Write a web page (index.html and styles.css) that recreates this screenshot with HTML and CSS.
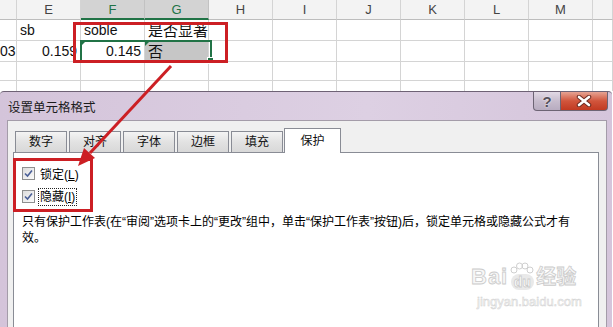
FILE: index.html
```html
<!DOCTYPE html>
<html lang="zh">
<head>
    <meta charset="UTF-8">
    <title>设置单元格格式</title>
    <link rel="stylesheet" href="styles.css">
</head>
<body>

    <div class="page">
        <div class="sheet">
            <div class="row head">
                <div class="cell"></div>
                <div class="cell">E</div>
                <div class="cell sel">F</div>
                <div class="cell sel">G</div>
                <div class="cell">H</div>
                <div class="cell">I</div>
                <div class="cell">J</div>
                <div class="cell">K</div>
                <div class="cell">L</div>
                <div class="cell">M</div>
                <div class="cell"></div>
            </div>
            <div class="row r1">
                <div class="cell"></div>
                <div class="cell">sb</div>
                <div class="cell">soble</div>
                <div class="cell cjk">是否显著</div>
                <div class="cell"></div><div class="cell"></div><div class="cell"></div>
                <div class="cell"></div><div class="cell"></div><div class="cell"></div><div class="cell"></div>
            </div>
            <div class="row">
                <div class="cell num">03</div>
                <div class="cell num">0.159</div>
                <div class="cell num flag">0.145</div>
                <div class="cell cjk flag grey">否</div>
                <div class="cell"></div><div class="cell"></div><div class="cell"></div>
                <div class="cell"></div><div class="cell"></div><div class="cell"></div><div class="cell"></div>
            </div>
            <div class="row">
                <div class="cell"></div><div class="cell"></div><div class="cell"></div><div class="cell"></div>
                <div class="cell"></div><div class="cell"></div><div class="cell"></div><div class="cell"></div>
                <div class="cell"></div><div class="cell"></div><div class="cell"></div>
            </div>
            <div class="row">
                <div class="cell"></div><div class="cell"></div><div class="cell"></div><div class="cell"></div>
                <div class="cell"></div><div class="cell"></div><div class="cell"></div><div class="cell"></div>
                <div class="cell"></div><div class="cell"></div><div class="cell"></div>
            </div>
            <div class="selection"><span class="handle"></span></div>
        </div>

        <div class="dialog">
            <div class="titlebar">
                <span class="title">设置单元格格式</span>
                <div class="caption-btns">
                    <span class="btn-help">?</span>
                    <span class="btn-close">
                        <svg width="16" height="12" viewBox="0 0 16 12">
                            <path d="M3 2 L13 10 M13 2 L3 10" stroke="#6b2a20" stroke-width="4.5" stroke-linecap="round"/>
                            <path d="M3 2 L13 10 M13 2 L3 10" stroke="#fff" stroke-width="2.6" stroke-linecap="round"/>
                        </svg>
                    </span>
                </div>
            </div>
            <div class="client">
                <div class="tabs">
                    <span class="tab">数字</span>
                    <span class="tab">对齐</span>
                    <span class="tab">字体</span>
                    <span class="tab">边框</span>
                    <span class="tab">填充</span>
                    <span class="tab active">保护</span>
                </div>
                <div class="panel">
                    <label class="check">
                        <span class="box"><svg width="9" height="9" viewBox="0 0 9 9"><path d="M1 4.5 L3.5 7 L8 1.5" fill="none" stroke="#4a5f97" stroke-width="1.6"/></svg></span>
                        <span>锁定(<u>L</u>)</span>
                    </label>
                    <label class="check">
                        <span class="box"><svg width="9" height="9" viewBox="0 0 9 9"><path d="M1 4.5 L3.5 7 L8 1.5" fill="none" stroke="#4a5f97" stroke-width="1.6"/></svg></span>
                        <span class="focus">隐藏(<u>I</u>)</span>
                    </label>
                    <p class="note">只有保护工作表(在“审阅”选项卡上的“更改”组中，单击“保护工作表”按钮)后，锁定单元格或隐藏公式才有效。</p>

                    <div class="watermark">
                        <div class="logo">
                            <span class="bai">Bai</span>
                            <span class="paw">
                                <svg width="24" height="12" viewBox="0 0 24 12">
                                    <circle cx="4" cy="8" r="3" fill="none" stroke="#cfcfcf"/>
                                    <circle cx="9.5" cy="4" r="3" fill="none" stroke="#cfcfcf"/>
                                    <circle cx="15" cy="4" r="3" fill="none" stroke="#cfcfcf"/>
                                    <circle cx="20" cy="8" r="3" fill="none" stroke="#cfcfcf"/>
                                </svg>
                                <span class="du">du</span>
                            </span>
                            <span class="jy">经验</span>
                        </div>
                        <div class="site">jingyan.baidu.com</div>
                    </div>
                </div>
            </div>
        </div>

        <div class="mark mark-cells"></div>
        <div class="mark mark-checks"></div>
        <svg class="arrow" width="613" height="327" viewBox="0 0 613 327">
            <line x1="171" y1="66" x2="90" y2="153" stroke="#cc1f24" stroke-width="3"/>
            <polygon points="78,166 95,158 84,148" fill="#cc1f24"/>
        </svg>
    </div>

</body>
</html>
```

FILE: styles.css
```css
body {
    margin: 0;
    background: #fff;
    font-family: 'Liberation Sans', Arial, sans-serif;
}
.page {
    position: relative;
    width: 613px;
    height: 327px;
    overflow: hidden;
}
.sheet {
    position: relative;
    height: 91px;
    overflow: hidden;
}
.row {
    display: grid;
    grid-template-columns: 17px repeat(9, 64px) 1fr;
    height: 20px;
}
.row.r1 { height: 21px; }
.cell {
    box-sizing: border-box;
    border-right: 1px solid #d4d4d4;
    border-bottom: 1px solid #d4d4d4;
    font-size: 14px;
    line-height: 20px;
    padding: 0 3px;
    color: #111;
    white-space: nowrap;
    overflow: hidden;
    position: relative;
}
.head .cell {
    background: #f3f3f3;
    color: #444;
    font-size: 13px;
    text-align: center;
    line-height: 19px;
    border-bottom-color: #bdbdbd;
}
.head .cell.sel {
    background: #d3d3d3;
    color: #217346;
    border-bottom: 2px solid #217346;
    border-right-color: #c2c2c2;
}
.cjk {
    font-family: 'Noto Sans CJK SC', sans-serif;
    font-size: 15px;
}
.num { text-align: right; }
.row .cell.num:first-child {
    padding: 0 2px 0 0;
    overflow: visible;
}
.grey { background: #c6c6c6; }
.flag::before {
    content: "";
    position: absolute;
    left: 0;
    top: 0;
    border-top: 5px solid #217346;
    border-right: 5px solid transparent;
}
.selection {
    position: absolute;
    left: 80px;
    top: 40px;
    width: 128px;
    height: 18px;
    border: 2px solid #217346;
}
.handle {
    position: absolute;
    right: -4px;
    bottom: -4px;
    width: 5px;
    height: 5px;
    background: #217346;
    border: 1px solid #fff;
}

/* dialog */
.dialog {
    width: 612px;
    height: 236px;
    background: linear-gradient(to right, #d4c4da, #ddd0e3 60%, #d5c5db);
    border-top: 1px solid #6e6275;
    border-radius: 4px 4px 0 0;
    box-sizing: border-box;
    font-family: 'Liberation Sans', 'Noto Sans CJK SC', sans-serif;
    font-size: 12px;
    color: #000;
}
.titlebar {
    display: flex;
    height: 28px;
}
.title {
    padding: 5px 0 0 8px;
    font-size: 12.5px;
    color: #1c1c1c;
}
.caption-btns {
    display: flex;
    margin-left: auto;
    margin-right: 4px;
    height: 19px;
}
.btn-help, .btn-close {
    display: flex;
    align-items: center;
    justify-content: center;
    box-sizing: border-box;
    height: 19px;
    border: 1px solid #6d6474;
    border-top: none;
}
.btn-help {
    width: 28px;
    border-radius: 0 0 0 4px;
    background: linear-gradient(#e2d9e5, #c7bccd 50%, #b8acc0);
    color: #55505a;
    font: bold 15px 'Liberation Sans', sans-serif;
    text-shadow: 0 0 2px #fff;
}
.btn-close {
    width: 47px;
    border-left: none;
    border-radius: 0 0 4px 0;
    background: linear-gradient(#e6a393, #d1553c 50%, #c13a22);
}
.client {
    margin: 0 5px 0 7px;
    height: 220px;
    background: #f0f0f0;
    border: 1px solid #a49ca9;
    box-sizing: border-box;
    padding: 10px 7px 0 5px;
}
.tabs {
    display: flex;
    align-items: flex-end;
    height: 21px;
    padding-left: 2px;
}
.tab {
    width: 52px;
    height: 21px;
    box-sizing: border-box;
    margin-right: 2px;
    border: 1px solid #898c95;
    border-bottom: none;
    background: linear-gradient(#f4f4f4, #e2e2e2 50%, #d8d8d8);
    text-align: center;
    line-height: 20px;
    color: #111;
}
.tab.active {
    position: relative;
    z-index: 1;
    width: 57px;
    height: 25px;
    margin: 0 0 -1px -1px;
    background: #fff;
    line-height: 24px;
}
.panel {
    position: relative;
    height: 200px;
    background: #fff;
    border: 1px solid #898c95;
    padding: 9px 8px 0 8px;
}
.check {
    display: flex;
    align-items: center;
    gap: 5px;
    height: 23px;
}
.box {
    display: flex;
    align-items: center;
    justify-content: center;
    width: 13px;
    height: 13px;
    box-sizing: border-box;
    border: 1px solid #8e8f8f;
    background: linear-gradient(135deg, #dcdcdc, #fbfbfb);
}
.focus {
    border: 1px dotted #222;
    padding: 0 1px;
    margin-left: -2px;
    line-height: 16px;
}
.note {
    margin: 6px 0 0 0;
    width: 560px;
    line-height: 16px;
}
.watermark {
    position: absolute;
    left: 457px;
    top: 108px;
    color: #f7f7f7;
    -webkit-text-stroke: 0.8px #cbcbcb;
}
.logo {
    display: flex;
    align-items: flex-end;
}
.bai {
    font: bold 22px 'Liberation Sans', sans-serif;
    letter-spacing: 1px;
}
.paw {
    display: flex;
    flex-direction: column;
    align-items: center;
    margin: 0 2px;
}
.du {
    font: bold 14px 'Liberation Sans', sans-serif;
    background: #e9e9e9;
    border-radius: 8px;
    padding: 0 3px;
    color: #fff;
}
.jy {
    font-size: 20px;
    font-weight: bold;
}
.site {
    margin: 4px 0 0 6px;
    font: 13px 'Liberation Sans', sans-serif;
    -webkit-text-stroke: 0.5px #d2d2d2;
}

/* annotations */
.mark {
    position: absolute;
    border: 3px solid #cc1f24;
    box-sizing: border-box;
}
.mark-cells {
    left: 73px;
    top: 22px;
    width: 155px;
    height: 41px;
}
.mark-checks {
    left: 13px;
    top: 158px;
    width: 80px;
    height: 54px;
}
.arrow {
    position: absolute;
    left: 0;
    top: 0;
    pointer-events: none;
}
```
